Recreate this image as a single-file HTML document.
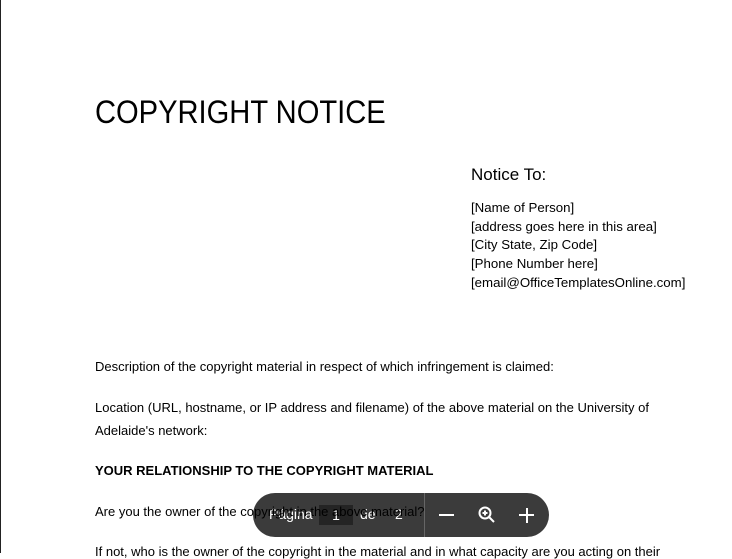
<!DOCTYPE html>
<html><head><meta charset="utf-8"><style>
body{margin:0;width:732px;height:553px;overflow:hidden;background:#fff;position:relative;font-family:"Liberation Sans",Arial,sans-serif;color:#000}
.l{position:absolute;left:0;top:0;width:1px;height:553px;background:#222}
.t{position:absolute;white-space:nowrap}
.cal{font-family:"Liberation Sans",sans-serif}
.b{font-size:13px}
.bar{position:absolute;left:253px;top:493px;width:296px;height:44px;border-radius:22px;background:#3b3b3b;color:#fff;font-size:14px}
</style></head><body>
<div class="l"></div>
<div class="t cal" style="left:95px;top:94px;font-size:32px;transform:scaleX(0.91);transform-origin:left">COPYRIGHT NOTICE</div>
<div class="t cal" style="left:471px;top:165px;font-size:17px">Notice To:</div>
<div class="t cal" style="left:471px;top:199px;font-size:13px;line-height:18.7px;transform:scaleX(1.02);transform-origin:left">[Name of Person]<br>[address goes here in this area]<br>[City State, Zip Code]<br>[Phone Number here]<br>[email@OfficeTemplatesOnline.com]</div>
<div class="t b" style="left:95px;top:359px">Description of the copyright material in respect of which infringement is claimed:</div>
<div class="t b" style="left:95px;top:396px;line-height:23px">Location (URL, hostname, or IP address and filename) of the above material on the University of<br>Adelaide's network:</div>
<div class="t b" style="left:95px;top:463px;font-weight:bold">YOUR RELATIONSHIP TO THE COPYRIGHT MATERIAL</div>
<div class="t b" style="left:95px;top:544px">If not, who is the owner of the copyright in the material and in what capacity are you acting on their</div>
<div class="bar">
<span class="t" style="left:16px;top:13px">Página</span>
<span class="t" style="left:66px;top:12px;width:34px;height:20px;background:#242424;text-align:center;line-height:20px">1</span>
<span class="t" style="left:107px;top:13px">de</span>
<span class="t" style="left:142px;top:13px">2</span>
<span class="t" style="left:171px;top:0;width:1px;height:44px;background:#666"></span>
<span class="t" style="left:186px;top:21px;width:15px;height:2px;background:#fff"></span>
<svg class="t" style="left:224px;top:12px" width="20" height="20" viewBox="0 0 20 20" fill="none" stroke="#fff" stroke-width="2"><circle cx="8" cy="8" r="5.5"/><path d="M12 12l5 5M8 5.5v5M5.5 8h5"/></svg>
<span class="t" style="left:266px;top:21px;width:15px;height:2px;background:#fff"></span>
<span class="t" style="left:272.5px;top:14.5px;width:2px;height:15px;background:#fff"></span>
</div>
<div class="t b" style="left:95px;top:504px">Are you the owner of the copyright in the above material?</div>
</body></html>
